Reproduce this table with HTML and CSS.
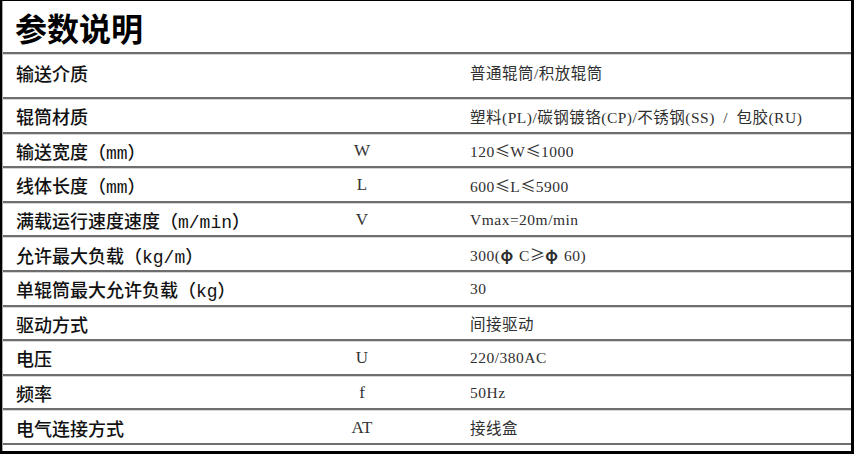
FILE: index.html
```html
<!DOCTYPE html>
<html lang="zh-CN">
<head>
<meta charset="utf-8">
<title>参数说明</title>
<link rel="stylesheet" href="styles.css">
</head>
<body>
<div class="sheet">
  <div class="inner">
    <h1 class="title">参数说明</h1>
    <div class="table">
      <div class="row row-tall">
        <div class="label">输送介质</div><div class="sym"></div><div class="val">普通辊筒/积放辊筒</div>
      </div>
      <div class="row">
        <div class="label">辊筒材质</div><div class="sym"></div><div class="val">塑料(PL)/碳钢镀铬(CP)/不锈钢(SS) <span class="wide">/</span> 包胶(RU)</div>
      </div>
      <div class="row">
        <div class="label">输送宽度（mm）</div><div class="sym">W</div><div class="val">120<span class="fw">≤</span>W<span class="fw">≤</span>1000</div>
      </div>
      <div class="row">
        <div class="label">线体长度（mm）</div><div class="sym">L</div><div class="val">600<span class="fw">≤</span>L<span class="fw">≤</span>5900</div>
      </div>
      <div class="row">
        <div class="label">满载运行速度速度（m/min）</div><div class="sym">V</div><div class="val">Vmax=20m/min</div>
      </div>
      <div class="row">
        <div class="label">允许最大负载（kg/m）</div><div class="sym"></div><div class="val">300(<span class="phi">φ</span> C<span class="fw">≥</span><span class="phi">φ</span> 60)</div>
      </div>
      <div class="row">
        <div class="label">单辊筒最大允许负载（kg）</div><div class="sym"></div><div class="val">30</div>
      </div>
      <div class="row">
        <div class="label">驱动方式</div><div class="sym"></div><div class="val">间接驱动</div>
      </div>
      <div class="row">
        <div class="label">电压</div><div class="sym">U</div><div class="val">220/380AC</div>
      </div>
      <div class="row">
        <div class="label">频率</div><div class="sym">f</div><div class="val">50Hz</div>
      </div>
      <div class="row row-last">
        <div class="label">电气连接方式</div><div class="sym">AT</div><div class="val">接线盒</div>
      </div>
    </div>
  </div>
</div>
</body>
</html>
```
FILE: styles.css
```css
* { box-sizing: border-box; }
html, body { margin: 0; padding: 0; background: #000; }
body { width: 854px; height: 454px; overflow: hidden; }

.sheet {
  width: 854px;
  height: 454px;
  border-top: 1px solid #000;
  border-left: 2px solid #000;
  border-right: 3px solid #000;
  border-bottom: 3px solid #000;
  background: #fff;
}
.inner {
  height: 100%;
  border-left: 1px solid #a8a8a8;
  background: #fff;
}

.title {
  margin: 0;
  height: 51px;
  padding-left: 12px;
  display: flex;
  align-items: center;
  font-family: "Noto Sans CJK SC", sans-serif;
  font-weight: 700;
  font-size: 32px;
  color: #000;
}

.table { display: flex; flex-direction: column; }

.row {
  display: grid;
  grid-template-columns: 284px 124px 1fr;
  align-items: center;
  height: 34.6px;
  padding-left: 13px;
  border-top: 2px solid #6e6e6e;
  box-shadow: inset 0 1px 0 #d6d6d6;
}
.row-tall { height: 45px; padding-bottom: 8px; }
.row-last {
  height: 36.6px;
  border-bottom: 2px solid #6e6e6e;
}

.label {
  font-family: "Liberation Mono", "Noto Sans CJK SC", monospace;
  font-size: 18px;
  font-weight: 500;
  color: #111;
  white-space: nowrap;
  padding-top: 2px;
}
.sym {
  text-align: center;
  font-family: "Liberation Serif", serif;
  font-size: 17px;
  color: #333;
  padding-top: 2px;
}
.val {
  padding-left: 46px;
  font-family: "Liberation Serif", "Noto Sans CJK SC", serif;
  font-size: 15.5px;
  letter-spacing: 0.5px;
  word-spacing: 1px;
  color: #2f2f2f;
  white-space: nowrap;
  padding-top: 1px;
}
.wide { margin: 0 3px; }
.fw {
  font-family: "Noto Sans CJK SC", sans-serif;
  display: inline-block;
  width: 1em;
  text-align: center;
}
.phi {
  font-family: "Noto Sans CJK SC", sans-serif;
  font-weight: 700;
}
```
